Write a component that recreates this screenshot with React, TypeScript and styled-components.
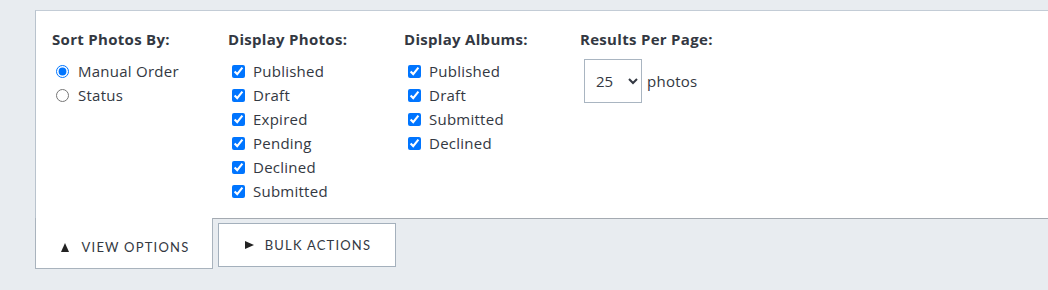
import React, { useState } from "react";
import styled, { createGlobalStyle } from "styled-components";

const GlobalStyle = createGlobalStyle`
    html, body {
        margin: 0;
        padding: 0;
        background: #e8ecf0;
    }
    body {
        font-family: "Open Sans", "Noto Sans", "Liberation Sans", sans-serif;
        color: #333842;
    }
`;

const Page = styled.div`
    width: 1048px;
    height: 290px;
    padding: 10px 0 0 35px;
    box-sizing: border-box;
    overflow: hidden;
`;

const Panel = styled.div`
    background: #ffffff;
    border-top: 1px solid #c3ccd6;
    border-left: 1px solid #b9c3cd;
    border-bottom: 1px solid #a4aab1;
    height: 209px;
    box-sizing: border-box;
    padding: 18px 0 0 16px;
    display: grid;
    grid-template-columns: repeat(4, 176px);
    align-items: start;
`;

const Column = styled.div`
    display: flex;
    flex-direction: column;
`;

const Heading = styled.div`
    font-size: 15px;
    font-weight: 700;
    line-height: 20px;
    letter-spacing: 0.3px;
    color: #333842;
    margin-bottom: 10px;
`;

const OptionRow = styled.label<{ $radio?: boolean }>`
    display: flex;
    align-items: center;
    height: 24px;
    font-size: 15px;
    letter-spacing: 0.25px;
    color: #333842;
    cursor: pointer;

    input {
        margin: 0 ${p => (p.$radio ? "9px" : "8px")} 0 4px;
        width: 13px;
        height: 13px;
        accent-color: #0075ff;
    }
`;

const PerPage = styled.div`
    display: flex;
    align-items: center;
    gap: 5px;
    padding-left: 4px;
    font-size: 15px;
    letter-spacing: 0.25px;
`;

const Select = styled.select`
    width: 58px;
    height: 44px;
    border: 1px solid #a9b5c1;
    border-radius: 0;
    background: #fff;
    font-family: inherit;
    font-size: 15px;
    color: #333842;
    padding: 0 4px 0 7px;
`;

const TabRow = styled.div`
    display: flex;
    align-items: flex-start;
`;

const ViewTab = styled.div`
    width: 178px;
    height: 51px;
    margin-top: -1px;
    box-sizing: border-box;
    background: #fff;
    border: 1px solid #a9b3bd;
    border-top: 0;
    display: flex;
    align-items: center;
    justify-content: center;
    padding-top: 8px;
`;

const BulkButton = styled.button`
    width: 178px;
    height: 44px;
    margin: 4px 0 0 5px;
    box-sizing: border-box;
    background: #fff;
    border: 1px solid #a4b0bc;
    display: flex;
    align-items: center;
    justify-content: center;
    cursor: pointer;
    padding: 0;
`;

const TabLabel = styled.span`
    font-family: "Lato", "Open Sans", sans-serif;
    font-size: 13px;
    letter-spacing: 1.2px;
    color: #333842;
    text-transform: uppercase;
    display: flex;
    align-items: center;
`;

const Arrow = styled.span<{ $dir: "up" | "right" }>`
    width: 0;
    height: 0;
    margin-right: 13px;
    ${p =>
        p.$dir === "up"
            ? `border-left: 4.5px solid transparent;
               border-right: 4.5px solid transparent;
               border-bottom: 9px solid #222;
               margin-left: 2px;`
            : `border-top: 4.5px solid transparent;
               border-bottom: 4.5px solid transparent;
               border-left: 9px solid #222;
               margin-left: 2px;
               margin-right: 11px;`}
`;

const photoStates = ["Published", "Draft", "Expired", "Pending", "Declined", "Submitted"];
const albumStates = ["Published", "Draft", "Submitted", "Declined"];

export default function App() {
    const [sort, setSort] = useState("manual");
    const [perPage, setPerPage] = useState("25");

    return (
        <>
            <GlobalStyle />
            <Page>
                <Panel>
                    <Column>
                        <Heading>Sort Photos By:</Heading>
                        <OptionRow $radio>
                            <input type="radio" name="sort" checked={sort === "manual"} onChange={() => setSort("manual")} />
                            Manual Order
                        </OptionRow>
                        <OptionRow $radio>
                            <input type="radio" name="sort" checked={sort === "status"} onChange={() => setSort("status")} />
                            Status
                        </OptionRow>
                    </Column>

                    <Column>
                        <Heading>Display Photos:</Heading>
                        {photoStates.map(s => (
                            <OptionRow key={s}>
                                <input type="checkbox" defaultChecked />
                                {s}
                            </OptionRow>
                        ))}
                    </Column>

                    <Column>
                        <Heading>Display Albums:</Heading>
                        {albumStates.map(s => (
                            <OptionRow key={s}>
                                <input type="checkbox" defaultChecked />
                                {s}
                            </OptionRow>
                        ))}
                    </Column>

                    <Column>
                        <Heading>Results Per Page:</Heading>
                        <PerPage>
                            <Select value={perPage} onChange={e => setPerPage(e.target.value)}>
                                <option>10</option>
                                <option>25</option>
                                <option>50</option>
                                <option>100</option>
                            </Select>
                            photos
                        </PerPage>
                    </Column>
                </Panel>

                <TabRow>
                    <ViewTab>
                        <TabLabel><Arrow $dir="up" />View Options</TabLabel>
                    </ViewTab>
                    <BulkButton>
                        <TabLabel><Arrow $dir="right" />Bulk Actions</TabLabel>
                    </BulkButton>
                </TabRow>
            </Page>
        </>
    );
}
